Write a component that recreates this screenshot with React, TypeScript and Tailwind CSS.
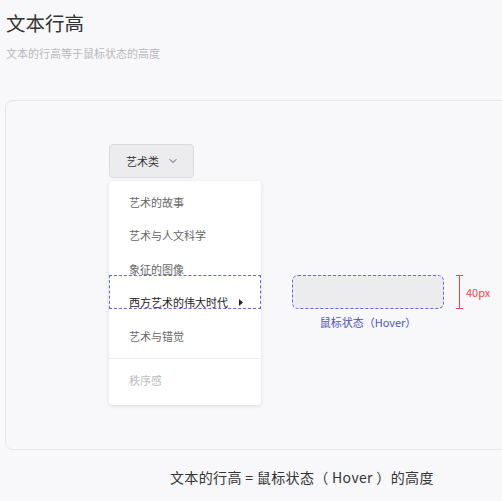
import { ChevronDown } from "lucide-react";

const items = ["艺术的故事", "艺术与人文科学", "象征的图像", "西方艺术的伟大时代", "艺术与错觉"];

const fontStack = "font-['Noto_Sans_CJK_SC','Noto_Sans',sans-serif]";

export default function App() {
  return (
    <div className={`relative h-[501px] w-[502px] overflow-hidden bg-[#f8f8fa] ${fontStack}`}>
      <div className="pl-[6px] pt-[9px]">
        <h1 className="text-[19.5px] leading-[28px] text-[#333]">文本行高</h1>
        <p className="mt-[8px] text-[11px] leading-[16px] text-[#b8b8bc]">文本的行高等于鼠标状态的高度</p>
      </div>

      <div className="ml-[5px] mt-[39px] h-[350px] w-[520px] rounded-lg border border-[#e4e4e8] bg-[#f8f8fa]">
        <div className="flex items-start pl-[103px] pt-[43px]">
          <div className="flex w-[152px] flex-col">
            <button
              className="flex h-[34px] w-[85px] items-center justify-center gap-[8px] rounded-[4px] border border-[#dcdce0] bg-[#ececee] pl-[2px] text-[11px] text-[#333]"
              type="button"
            >
              艺术类
              <ChevronDown className="text-[#444]" size={12} strokeWidth={1.8} />
            </button>

            <div className="relative mt-[3px] w-[152px] rounded-[4px] bg-white py-[4px] shadow-[0_1px_4px_rgba(0,0,0,0.12)]">
              {items.map((item, index) => (
                <div
                  className={`flex h-[33.5px] items-center pl-[20px] pr-[20px] text-[11px] ${index === 3 ? "text-[#222]" : "text-[#666]"}`}
                  key={item}
                >
                  <span className="flex-1">{item}</span>
                  {index === 3 ? (
                    <svg className="mr-[-2px]" height="7" viewBox="0 0 4 7" width="4">
                      <path d="M0 0 L4 3.5 L0 7 Z" fill="#222" />
                    </svg>
                  ) : null}
                </div>
              ))}
              <div className="my-[5px] h-px bg-[#f0f0f2]" />
              <div className="flex h-[33.5px] items-center pl-[20px] text-[11px] text-[#bdbdc0]">秩序感</div>
              <div className="h-[4px]" />

              <div className="absolute left-0 top-[94px] h-[34px] w-[152px] border border-dashed border-[#6068dc]" />
            </div>
          </div>

          <div className="ml-[31px] mt-[131px] flex flex-col items-center">
            <div className="h-[34px] w-[152px] rounded-[6px] border border-dashed border-[#6068dc] bg-[#ececee]" />
            <p className="mt-[5px] text-[11px] leading-[16px] text-[#4a53b8]">鼠标状态（Hover）</p>
          </div>

          <div className="ml-[12px] mt-[131px] flex items-center">
            <div className="flex h-[34px] w-[7px] flex-col items-center justify-between">
              <div className="h-px w-[7px] bg-[#f0444a]" />
              <div className="w-px flex-1 bg-[#f0444a]" />
              <div className="h-px w-[7px] bg-[#f0444a]" />
            </div>
            <span className="ml-[3px] text-[11px] text-[#f0444a]">40px</span>
          </div>
        </div>
      </div>

      <p className="ml-[170px] mt-[17px] text-[14px] leading-[20px] tracking-[0.35px] text-[#333]">文本的行高 = 鼠标状态（ Hover ）的高度</p>
    </div>
  );
}
